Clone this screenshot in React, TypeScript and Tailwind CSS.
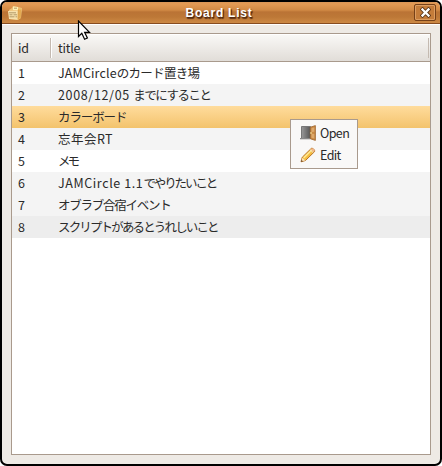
import React from "react";

type Run = { text: string; cls: string };
type Row = { id: number; bg: string; runs: Run[] };

const rows: Row[] = [
  { id: 1, bg: "bg-white", runs: [{ text: "JAMCircle", cls: "tracking-[0.15px]" }, { text: "のカード置き場", cls: "tracking-[-0.7px]" }] },
  { id: 2, bg: "bg-[#f4f4f4]", runs: [{ text: "2008/12/05 ", cls: "tracking-[0.65px]" }, { text: "までにすること", cls: "tracking-[-1.5px]" }] },
  { id: 3, bg: "bg-linear-to-b from-[#ffdc9c] to-[#f3c36c]", runs: [{ text: "カラーボード", cls: "tracking-[-1.1px]" }] },
  { id: 4, bg: "bg-[#f4f4f4]", runs: [{ text: "忘年会", cls: "tracking-[0.5px]" }, { text: "RT", cls: "tracking-[0.3px]" }] },
  { id: 5, bg: "bg-white", runs: [{ text: "メモ", cls: "tracking-[-3px]" }] },
  { id: 6, bg: "bg-[#f4f4f4]", runs: [{ text: "JAMCircle 1.1", cls: "tracking-[0.6px]" }, { text: "でやりたいこと", cls: "tracking-[-2.1px]" }] },
  { id: 7, bg: "bg-[#f4f4f4]", runs: [{ text: "オブラブ合宿イベント", cls: "tracking-[-1.25px]" }] },
  { id: 8, bg: "bg-[#ededed]", runs: [{ text: "スクリプトがあるとうれしいこと", cls: "tracking-[-1.85px]" }] },
];

function CardsIcon() {
  return (
    <svg className="shrink-0" width="16" height="16" viewBox="0 0 16 16">
      <path d="M2 5 5 3l1-2 5 1 4 1-1 10-3 2-9-1z" fill="#efc47a" />
      <path d="M11 3.5h3.5L13.5 13 11 15z" fill="#e9b660" />
      <path d="M6 1.5 11 2v3H6z" fill="#fff0b4" />
      <path d="M1 6l10-.5v9.3L2 14z" fill="#f7e2ae" />
      <path d="M2 7.8h7M2.5 9.8h3m1 0h3.5M2.5 11.8h5m1 0h1.5M7 3.2h3" stroke="#a08757" strokeWidth=".8" />
      <path d="M11.3 4.5 11 14.5M13 5v8" stroke="#d9983f" strokeWidth=".8" fill="none" />
    </svg>
  );
}

function DoorIcon() {
  return (
    <svg className="shrink-0" width="16" height="16" viewBox="0 0 16 16">
      <defs>
        <linearGradient id="opening" x1="0" y1="0" x2="1" y2="0">
          <stop offset="0" stopColor="#999" />
          <stop offset="1" stopColor="#555" />
        </linearGradient>
      </defs>
      <path d="M1.5 1.5h9v12h-9z" fill="url(#opening)" stroke="#777" />
      <path d="M0 13h10v1.3H0z" fill="#888" />
      <path d="M10.3 2.2 15.4.6v14.8l-5.1-1.6z" fill="#c98a45" stroke="#9f652d" strokeWidth=".8" />
      <path d="m11.5 3.2 2.8-.8v4.4l-2.8.2zm0 5.5 2.8.2v4.6l-2.8-.8z" fill="#dea96c" />
      <path d="M11 7v2" stroke="#f7e7a0" />
    </svg>
  );
}

function PencilIcon() {
  return (
    <svg className="shrink-0" width="16" height="16" viewBox="0 0 16 16">
      <path d="m1 14.8 1.3-4.6L11.2 1.5c1.2-1 4.3 1.6 3.3 3.2l-9 8.8z" fill="#f5bd42" stroke="#b87529" />
      <path d="m3.2 10.3 8-7.7 1 1-8 7.8z" fill="#ffe991" />
      <path d="m1.5 14.2.9-3.5 2.9 2.7z" fill="#f9e3bc" />
      <path d="m1 14.8.5-1.8 1.4 1.3z" fill="#583d27" />
      <path d="m11 2 1-.5c1-.5 3 1.3 2.5 2.6l-1 1z" fill="#f3b594" />
      <path d="m10 2.6 3.2 3.1" stroke="#eee2cd" />
    </svg>
  );
}

export default function App() {
  return (
    <div className="relative h-[466px] w-[442px] overflow-hidden bg-white font-['Noto_Sans_CJK_JP',sans-serif] text-[12.5px] leading-[22px] text-[#2a2a2a]">
      <div className="flex h-full flex-col overflow-hidden rounded-[7px] border-2 border-black bg-[#eeeae5]">
        <header className="flex h-[22px] shrink-0 items-center border-b border-[#874c20] bg-[linear-gradient(to_bottom,#d99556_0,#e39a54_2px,#d28a45_8px,#ba7335_10px,#bd7837_15px,#cd8944_21px)] pl-[5px] pr-1">
          <CardsIcon />
          <h1 className="flex-1 pl-px text-center font-['Liberation_Sans','Noto_Sans',sans-serif] text-[12px] font-bold leading-5 tracking-[0.75px] text-white [text-shadow:1px_1px_1px_#50270e,1px_2px_1px_#603315]">Board List</h1>
          <button aria-label="Close" className="flex h-[17px] w-[22px] items-center justify-center rounded-[2px] border border-[#754018] bg-[#c47c3a] shadow-[inset_0_0_0_1px_#dc9d61]">
            <svg width="11" height="11" viewBox="0 0 11 11">
              <path d="m2.5 2.5 6 6m0-6-6 6" stroke="#583418" strokeWidth="4" strokeLinecap="square" />
              <path d="m2.5 2.5 6 6m0-6-6 6" stroke="white" strokeWidth="2.3" strokeLinecap="square" />
            </svg>
          </button>
        </header>
        <main className="flex min-h-0 flex-1 border-t border-white px-[9px] pt-[8px] pb-[9px]">
          <div className="flex w-full flex-col border border-[#a99a8d] bg-white">
            <div className="flex h-[28px] shrink-0 items-center border-b border-[#a99a8d] bg-linear-to-b from-[#faf9f7] to-[#e1ddd8] leading-5 shadow-[inset_0_1px_#fff]">
              <span className="w-[38px] pl-[6px] tracking-[-0.3px]">id</span>
              <span className="h-5 w-[2px] border-r border-white bg-[#c4bab1]" />
              <span className="flex-1 pl-[6px] tracking-[-0.2px]">title</span>
              <span className="mr-px h-5 w-px bg-[#c4bab1]" />
            </div>
            {rows.map((row) => (
              <div key={row.id} className={"flex h-[22px] shrink-0 whitespace-pre " + row.bg}>
                <span className="w-[46px] pl-[6px]">{row.id}</span>
                <span>{row.runs.map((run) => <span key={run.text} className={run.cls}>{run.text}</span>)}</span>
              </div>
            ))}
          </div>
        </main>
      </div>
      <div className="absolute left-[290px] top-[119px] h-[50px] w-[68px] border border-[#a99a8d] bg-[#f9f8f7] px-[9px] pt-[2px] tracking-[-0.6px]">
        <div className="flex h-[22px] items-center gap-[4px]"><DoorIcon /><span>Open</span></div>
        <div className="flex h-[22px] items-center gap-[4px]"><PencilIcon /><span>Edit</span></div>
      </div>
      <svg className="absolute left-[77px] top-[20px]" width="14" height="21" viewBox="0 0 14 21">
        <path d="M1.5 1v15.5l3.3-3.2 2.8 6 2.8-1.3-2.8-5.7h4.9z" fill="white" stroke="black" strokeWidth="1.2" />
      </svg>
    </div>
  );
}
